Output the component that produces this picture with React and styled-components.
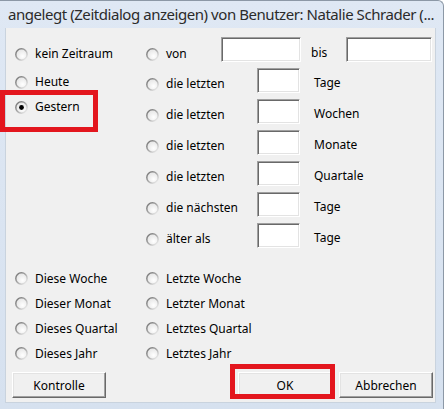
import React from "react";
import styled, { createGlobalStyle } from "styled-components";

const GlobalStyle = createGlobalStyle`
  html, body { margin: 0; padding: 0; background: #ffffff; }
  body { font-family: "Noto Sans", "Open Sans", sans-serif; }
  * { box-sizing: border-box; }
`;

const Window = styled.div`
  position: relative;
  width: 444px;
  height: 409px;
  display: flex;
  flex-direction: column;
  background: linear-gradient(#dfe8f4, #d6e1ef);
  border-top: 1px solid #8c98a6;
  border-right: 1px solid #8c98a6;
  border-top-right-radius: 6px;
  overflow: hidden;
`;

const TitleBar = styled.div`
  height: 27px;
  flex: none;
  padding: 2px 0 0 8px;
  font-size: 15px;
  line-height: 22px;
  color: #2b2b2b;
  white-space: nowrap;
  overflow: hidden;
  letter-spacing: -0.45px;
`;

const Frame = styled.div`
  flex: 1;
  display: flex;
  padding: 0 7px 6px 5px;
`;

const Content = styled.div`
  flex: 1;
  background: #f0f0f0;
  border: 1px solid #c9d3de;
  border-top: none;
  display: flex;
  flex-direction: column;
  padding: 9px 2px 4px 6px;
  font-size: 12px;
  color: #000;
`;

const TopSection = styled.div`
  display: flex;
  padding-left: 3px;
`;

const LeftCol = styled.div`
  width: 131px;
  display: flex;
  flex-direction: column;
  padding-top: 9px;
`;

const RightCol = styled.div`
  display: flex;
  flex-direction: column;
  gap: 6px;
`;

const VonRow = styled.div`
  display: flex;
  align-items: flex-start;
  height: 25px;
`;

const UnitRow = styled.div`
  display: grid;
  grid-template-columns: 111px 43px auto;
  align-items: start;
  height: 25px;
`;

const RadioItem = styled.label`
  display: flex;
  align-items: center;
  gap: 7px;
  height: 16px;
  line-height: 16px;
  white-space: nowrap;
  margin-top: ${(p) => p.$mt || 0}px;
  width: ${(p) => (p.$w ? `${p.$w}px` : "auto")};
  flex: none;
  svg { flex: none; }
`;

const TextLabel = styled.span`
  display: block;
  line-height: 16px;
  margin-top: ${(p) => p.$mt || 0}px;
  margin-left: ${(p) => p.$ml || 0}px;
  width: ${(p) => (p.$w ? `${p.$w}px` : "auto")};
  white-space: nowrap;
`;

const Field = styled.div`
  width: ${(p) => p.$w}px;
  height: 25px;
  background: #ffffff;
  border-top: 1px solid #a0a0a0;
  border-left: 1px solid #a0a0a0;
  border-right: 1px solid #ffffff;
  border-bottom: 1px solid #ffffff;
  box-shadow: inset 1px 1px 0 #696969, inset -1px -1px 0 #e3e3e3;
  flex: none;
`;

const BottomGrid = styled.div`
  display: grid;
  grid-template-columns: 131px auto;
  grid-auto-rows: 25px;
  align-items: center;
  margin-top: 18px;
  padding-left: 3px;
`;

const ButtonRow = styled.div`
  display: flex;
  gap: 7px;
  margin-top: 6px;
`;

const Button = styled.button`
  width: 94px;
  height: 26px;
  font-family: inherit;
  font-size: 12px;
  color: #000;
  background: #f0f0f0;
  border-top: 1px solid #ffffff;
  border-left: 1px solid #ffffff;
  border-right: 1px solid #696969;
  border-bottom: 1px solid #696969;
  box-shadow: inset -1px -1px 0 #a0a0a0, inset 1px 1px 0 #e3e3e3;
  padding: 0;
  margin-right: ${(p) => (p.$push ? "auto" : "0")};
`;

const Highlight = styled.div`
  position: absolute;
  left: ${(p) => p.$x}px;
  top: ${(p) => p.$y}px;
  width: ${(p) => p.$w}px;
  height: ${(p) => p.$h}px;
  border: 5px solid #e3161e;
  pointer-events: none;
`;

const RadioIcon = ({ checked }) => (
  <svg width="13" height="13" viewBox="0 0 13 13">
    <defs>
      <linearGradient id="rbStroke" x1="0" y1="0" x2="1" y2="1">
        <stop offset="0" stopColor="#6e6e6e" />
        <stop offset="0.5" stopColor="#a8a8a8" />
        <stop offset="1" stopColor="#fafafa" />
      </linearGradient>
      <radialGradient id="rbFill" cx="0.6" cy="0.65" r="0.65">
        <stop offset="0" stopColor="#ffffff" />
        <stop offset="1" stopColor="#e4e4e4" />
      </radialGradient>
    </defs>
    <circle cx="6.5" cy="6.5" r="5.7" fill="url(#rbFill)" stroke="url(#rbStroke)" strokeWidth="1.5" />
    {checked && <circle cx="6.5" cy="6.5" r="2.4" fill="#000" />}
  </svg>
);

const Radio = ({ label, checked, mt, w }) => (
  <RadioItem $mt={mt} $w={w}>
    <RadioIcon checked={checked} />
    <span>{label}</span>
  </RadioItem>
);

const unitRows = [
  ["die letzten", "Tage"],
  ["die letzten", "Wochen"],
  ["die letzten", "Monate"],
  ["die letzten", "Quartale"],
  ["die nächsten", "Tage"],
  ["älter als", "Tage"],
];

const bottomRows = [
  ["Diese Woche", "Letzte Woche"],
  ["Dieser Monat", "Letzter Monat"],
  ["Dieses Quartal", "Letztes Quartal"],
  ["Dieses Jahr", "Letztes Jahr"],
];

export default function App() {
  return (
    <>
      <GlobalStyle />
      <Window>
        <TitleBar>angelegt (Zeitdialog anzeigen) von Benutzer: Natalie Schrader (...</TitleBar>
        <Frame>
          <Content>
            <TopSection>
              <LeftCol>
                <Radio label="kein Zeitraum" />
                <Radio label="Heute" mt={12} />
                <Radio label="Gestern" checked mt={9} />
              </LeftCol>
              <RightCol>
                <VonRow>
                  <Radio label="von" mt={9} w={75} />
                  <Field $w={80} />
                  <TextLabel $mt={8} $ml={10} $w={35}>bis</TextLabel>
                  <Field $w={86} />
                </VonRow>
                {unitRows.map(([l, u], i) => (
                  <UnitRow key={i}>
                    <Radio label={l} mt={8} />
                    <Field $w={43} />
                    <TextLabel $mt={7} $ml={14}>{u}</TextLabel>
                  </UnitRow>
                ))}
              </RightCol>
            </TopSection>
            <BottomGrid>
              {bottomRows.map(([a, b]) => (
                <React.Fragment key={a}>
                  <Radio label={a} />
                  <Radio label={b} />
                </React.Fragment>
              ))}
            </BottomGrid>
            <ButtonRow>
              <Button $push>Kontrolle</Button>
              <Button>OK</Button>
              <Button>Abbrechen</Button>
            </ButtonRow>
          </Content>
        </Frame>
        <Highlight $x={0} $y={89} $w={98} $h={42} />
        <Highlight $x={230} $y={363} $w={105} $h={35} />
      </Window>
    </>
  );
}
